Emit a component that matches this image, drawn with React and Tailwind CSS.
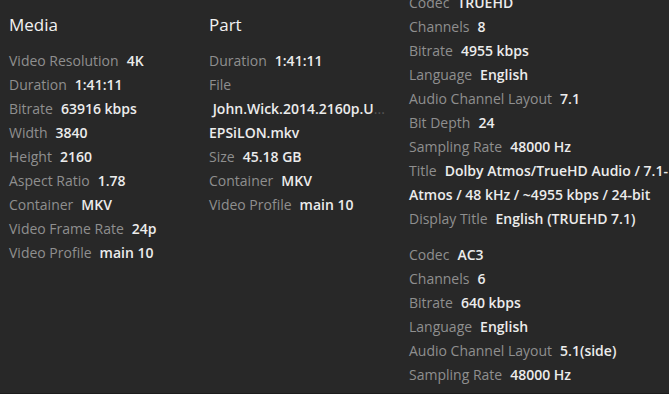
const media = [
  ["Video Resolution", "4K"],
  ["Duration", "1:41:11"],
  ["Bitrate", "63916 kbps"],
  ["Width", "3840"],
  ["Height", "2160"],
  ["Aspect Ratio", "1.78"],
  ["Container", "MKV"],
  ["Video Frame Rate", "24p"],
  ["Video Profile", "main 10"],
];

const truehd = [
  ["Codec", "TRUEHD"],
  ["Channels", "8"],
  ["Bitrate", "4955 kbps"],
  ["Language", "English"],
  ["Audio Channel Layout", "7.1"],
  ["Bit Depth", "24"],
  ["Sampling Rate", "48000 Hz"],
  ["Title", "Dolby Atmos/TrueHD Audio / 7.1-Atmos / 48 kHz / ~4955 kbps / 24-bit"],
  ["Display Title", "English (TRUEHD 7.1)"],
];

const ac3 = [
  ["Codec", "AC3"],
  ["Channels", "6"],
  ["Bitrate", "640 kbps"],
  ["Language", "English"],
  ["Audio Channel Layout", "5.1(side)"],
  ["Sampling Rate", "48000 Hz"],
];

function Row({ label, value }) {
  return (
    <div className="leading-6">
      <span className="text-[#8f8f8f]">{label}</span>
      <span className="ml-2 font-semibold text-[#ececec]">{value}</span>
    </div>
  );
}

export default function App() {
  return (
    <div
      className="h-[394px] w-[669px] overflow-hidden bg-[#282828] border-b border-[#1c1c1c] text-[14px]"
      style={{ fontFamily: '"Open Sans", "Noto Sans", sans-serif' }}
    >
      <div className="flex pl-[9px]">
        {/* Media */}
        <div className="w-[200px] shrink-0">
          <h2 className="mt-[14px] mb-[13px] text-[17px] leading-[22px] font-medium text-[#f2f2f2]">Media</h2>
          {media.map(([l, v]) => (
            <Row key={l} label={l} value={v} />
          ))}
        </div>

        {/* Part */}
        <div className="w-[200px] shrink-0">
          <h2 className="mt-[14px] mb-[13px] text-[17px] leading-[22px] font-medium text-[#f2f2f2]">Part</h2>
          <Row label="Duration" value="1:41:11" />
          <div className="leading-6 text-[#8f8f8f]">File</div>
          <div className="leading-6 font-semibold text-[#ececec] whitespace-nowrap">
            &nbsp;John.Wick.2014.2160p.U<span className="font-normal text-[#555]">...</span>
          </div>
          <div className="leading-6 font-semibold text-[#ececec]">EPSiLON.mkv</div>
          <Row label="Size" value="45.18 GB" />
          <Row label="Container" value="MKV" />
          <Row label="Video Profile" value="main 10" />
        </div>

        {/* Audio streams */}
        <div className="flex-1 -mt-[9px]">
          {truehd.map(([l, v]) => (
            <Row key={l} label={l} value={v} />
          ))}
          <div className="mt-3">
            {ac3.map(([l, v]) => (
              <Row key={l} label={l} value={v} />
            ))}
          </div>
        </div>
      </div>
    </div>
  );
}
